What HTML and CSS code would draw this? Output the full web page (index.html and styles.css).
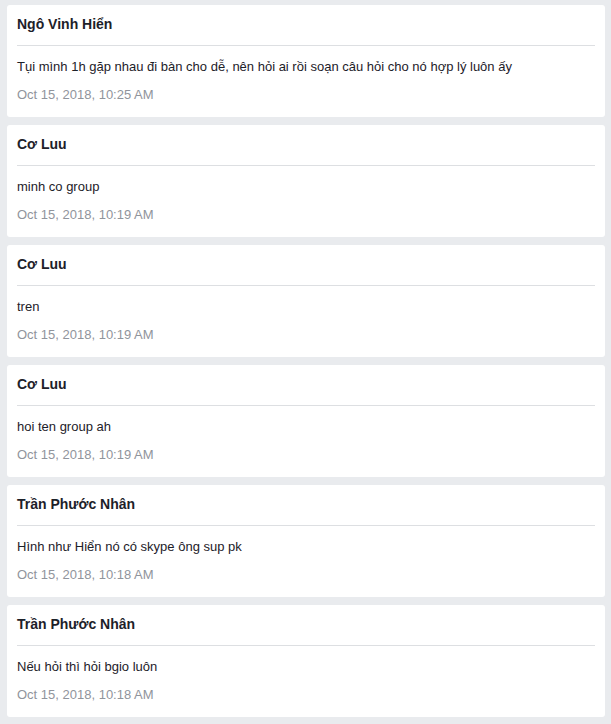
FILE: index.html
```html
<!DOCTYPE html>
<html lang="vi">
<head>
<meta charset="utf-8">
<title>Messages</title>
<link rel="stylesheet" href="styles.css">
</head>
<body>
<main class="feed">
  <article class="card">
    <header class="card-head">Ngô Vinh Hiển</header>
    <div class="card-body">
      <p class="msg">Tụi mình 1h gặp nhau đi bàn cho dễ, nên hỏi ai rồi soạn câu hỏi cho nó hợp lý luôn ấy</p>
      <p class="time">Oct 15, 2018, 10:25 AM</p>
    </div>
  </article>
  <article class="card">
    <header class="card-head">Cơ Luu</header>
    <div class="card-body">
      <p class="msg">minh co group</p>
      <p class="time">Oct 15, 2018, 10:19 AM</p>
    </div>
  </article>
  <article class="card">
    <header class="card-head">Cơ Luu</header>
    <div class="card-body">
      <p class="msg">tren</p>
      <p class="time">Oct 15, 2018, 10:19 AM</p>
    </div>
  </article>
  <article class="card">
    <header class="card-head">Cơ Luu</header>
    <div class="card-body">
      <p class="msg">hoi ten group ah</p>
      <p class="time">Oct 15, 2018, 10:19 AM</p>
    </div>
  </article>
  <article class="card">
    <header class="card-head">Trần Phước Nhân</header>
    <div class="card-body">
      <p class="msg">Hình như Hiển nó có skype ông sup pk</p>
      <p class="time">Oct 15, 2018, 10:18 AM</p>
    </div>
  </article>
  <article class="card">
    <header class="card-head">Trần Phước Nhân</header>
    <div class="card-body">
      <p class="msg">Nếu hỏi thì hỏi bgio luôn</p>
      <p class="time">Oct 15, 2018, 10:18 AM</p>
    </div>
  </article>
</main>
</body>
</html>
```
FILE: styles.css
```css
html, body {
  margin: 0;
  padding: 0;
}
body {
  background: #e9ebee;
  font-family: "Liberation Sans", Arial, sans-serif;
  color: #1d2129;
}
.feed {
  display: flex;
  flex-direction: column;
  gap: 8px;
  padding: 5px 6px 7px 7px;
}
.card {
  background: #fff;
  border-radius: 3px;
  padding: 0 10px;
  height: 112px;
  box-sizing: border-box;
}
.card-head {
  font-size: 14px;
  font-weight: bold;
  line-height: 19px;
  padding: 10px 0 11px;
  border-bottom: 1px solid #dddfe2;
}
.card-body {
  padding: 12px 0 13px;
}
.msg {
  margin: 0 0 10px;
  font-size: 13px;
  line-height: 18px;
}
.time {
  margin: 0;
  font-size: 13px;
  line-height: 18px;
  color: #90949c;
}
```
